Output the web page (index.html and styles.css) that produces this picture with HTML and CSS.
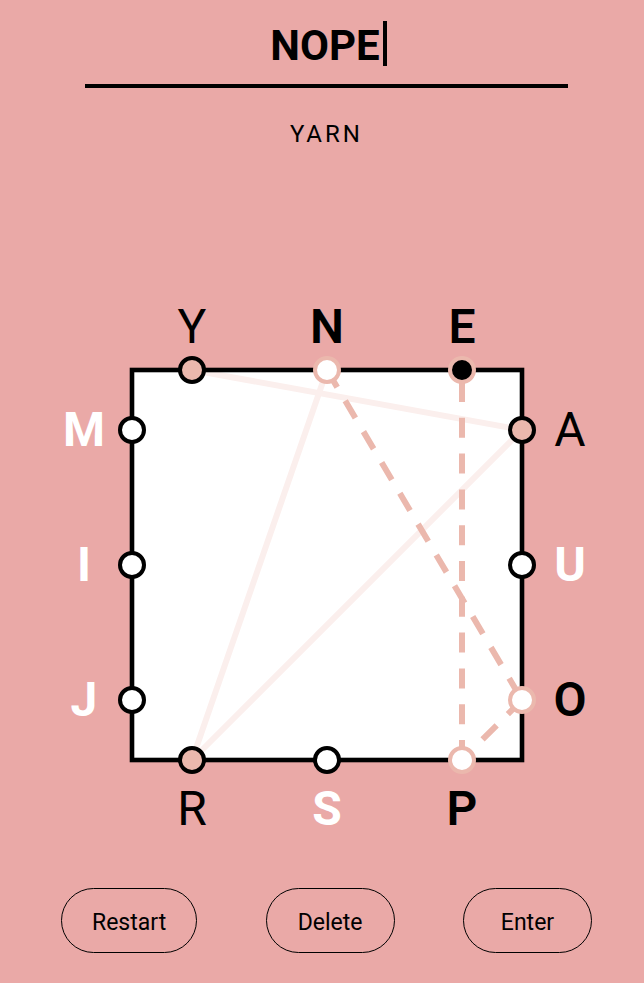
FILE: index.html
```html
<!DOCTYPE html>
<html lang="en">
<head>
<meta charset="utf-8">
<meta name="viewport" content="width=device-width, initial-scale=1">
<title>Word square</title>
<link rel="stylesheet" href="styles.css">
</head>
<body>
<main class="game">
  <div class="entry">
    <input class="word" type="text" size="4" value="NOPE" aria-label="Current word">
    <span class="caret"></span>
  </div>
  <p class="found">YARN</p>
  <svg class="board" viewBox="9 290 635 552" role="img" aria-label="Letter board">
    <rect class="square" x="132" y="370" width="390" height="390"/>
    <g class="played">
      <line x1="192" y1="370" x2="522" y2="430"/>
      <line x1="522" y1="430" x2="192" y2="760"/>
      <line x1="192" y1="760" x2="327" y2="370"/>
    </g>
    <rect class="frame" x="132" y="370" width="390" height="390"/>
    <g class="current">
      <line x1="327" y1="370" x2="522" y2="700"/>
      <line x1="522" y1="700" x2="462" y2="760"/>
      <line x1="462" y1="760" x2="462" y2="370"/>
    </g>
    <g class="dots">
      <circle class="used" cx="192" cy="370" r="12"/>
      <circle class="active" cx="327" cy="370" r="12"/>
      <circle class="active last" cx="462" cy="370" r="12"/>
      <circle class="used" cx="522" cy="430" r="12"/>
      <circle cx="522" cy="565" r="12"/>
      <circle class="active" cx="522" cy="700" r="12"/>
      <circle class="used" cx="192" cy="760" r="12"/>
      <circle cx="327" cy="760" r="12"/>
      <circle class="active" cx="462" cy="760" r="12"/>
      <circle cx="132" cy="430" r="12"/>
      <circle cx="132" cy="565" r="12"/>
      <circle cx="132" cy="700" r="12"/>
    </g>
    <g class="letters">
      <text class="used" x="192" y="343">Y</text>
      <text class="active" x="327" y="343">N</text>
      <text class="active" x="462" y="343">E</text>
      <text class="used" x="570" y="446">A</text>
      <text x="570" y="581">U</text>
      <text class="active" x="570" y="716">O</text>
      <text class="used" x="192" y="825">R</text>
      <text x="327" y="825">S</text>
      <text class="active" x="462" y="825">P</text>
      <text x="84" y="446">M</text>
      <text x="84" y="581">I</text>
      <text x="84" y="716">J</text>
    </g>
  </svg>
  <div class="actions">
    <button type="button">Restart</button>
    <button type="button">Delete</button>
    <button type="button">Enter</button>
  </div>
</main>
</body>
</html>
```
FILE: styles.css
```css
* {
  box-sizing: border-box;
}

body {
  margin: 0;
  background: #eaa9a7;
  color: #000;
  font-family: Roboto, "Liberation Sans", sans-serif;
}

.game {
  padding: 21px 0 30px 9px;
}

.entry {
  display: flex;
  justify-content: center;
  gap: 3px;
  margin: 0 76px;
  padding-bottom: 18px;
  border-bottom: 4px solid #000;
}

.word {
  field-sizing: content;
  height: 45px;
  padding: 4px 0 0 4px;
  border: 0;
  outline: 0;
  background: none;
  color: inherit;
  font: 700 42px/41px Roboto, "Liberation Sans", sans-serif;
}

.caret {
  width: 4px;
  height: 45px;
  background: #000;
}

.found {
  margin: 30px 0 0;
  font-size: 24px;
  line-height: 32px;
  letter-spacing: 3px;
  text-align: center;
}

.board {
  display: block;
  width: 100%;
  margin-top: 140px;
}

.square {
  fill: #fff;
}

.frame {
  fill: none;
  stroke: #000;
  stroke-width: 4.6;
}

.played {
  stroke: #fbefed;
  stroke-width: 6;
}

.current {
  stroke: #ebb8ad;
  stroke-width: 6;
  stroke-dasharray: 20 15.8;
}

.dots {
  fill: #fff;
  stroke: #000;
  stroke-width: 4;
}

.dots .used {
  fill: #ebb8ad;
}

.dots .active {
  stroke: #ebb8ad;
}

.dots .last {
  fill: #000;
}

.letters {
  fill: #fff;
  font-size: 48px;
  font-weight: 700;
  text-anchor: middle;
}

.letters .used {
  fill: #000;
  font-weight: 400;
}

.letters .active {
  fill: #000;
  font-weight: 600;
}

.actions {
  display: flex;
  justify-content: space-between;
  margin: 46px 52px 0;
}

.actions button {
  min-width: 129px;
  height: 65px;
  padding: 4px 30px 0;
  border: 1px solid #000;
  border-radius: 33px;
  background: none;
  color: inherit;
  font: 400 23px/32px Roboto, "Liberation Sans", sans-serif;
}
```
